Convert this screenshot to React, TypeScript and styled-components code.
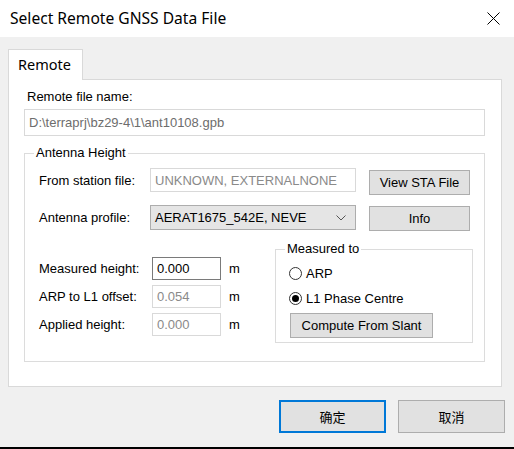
import React from 'react';
import styled, { createGlobalStyle, css } from 'styled-components';

const GlobalStyle = createGlobalStyle`
  html, body {
    margin: 0;
    padding: 0;
    background: #f0f0f0;
  }
  * {
    box-sizing: border-box;
  }
`;

const uiFont = `'Noto Sans', 'Open Sans', sans-serif`;
const formFont = `'Liberation Sans', Arial, sans-serif`;

const Window = styled.div`
  width: 514px;
  height: 449px;
  display: flex;
  flex-direction: column;
  background: #f0f0f0;
  overflow: hidden;
`;

const TitleBar = styled.div`
  height: 37px;
  background: #ffffff;
  display: flex;
  align-items: center;
  justify-content: space-between;
  padding: 0 14px 0 10px;
`;

const Title = styled.div`
  font-family: ${uiFont};
  font-size: 15.6px;
  color: #000;
  margin-top: -1px;
`;

const CloseIcon = () => (
  <svg width="13" height="13" viewBox="0 0 13 13">
    <path d="M0.5 0.5 L12.5 12.5 M12.5 0.5 L0.5 12.5" stroke="#000" strokeWidth="1" />
  </svg>
);

const Body = styled.div`
  padding: 11px 12px 0 8px;
  display: flex;
  flex-direction: column;
`;

const TabStrip = styled.div`
  display: flex;
  height: 31px;
`;

const Tab = styled.div`
  width: 75px;
  background: #ffffff;
  border: 1px solid #d9d9d9;
  border-bottom: none;
  font-family: ${uiFont};
  font-size: 14.5px;
  color: #000;
  padding: 4px 0 0 9px;
  position: relative;
  top: 1px;
`;

const Panel = styled.div`
  height: 308px;
  background: #ffffff;
  border: 1px solid #d9d9d9;
  padding: 9px 16px 0 15px;
`;

const FileLabel = styled.div`
  font-family: ${formFont};
  font-size: 13px;
  line-height: 16px;
  color: #000;
  padding-left: 3px;
`;

const FileInput = styled.div`
  margin-top: 4px;
  height: 27px;
  border: 1px solid #d9d9d9;
  font-family: ${formFont};
  font-size: 13px;
  color: #6d6d6d;
  display: flex;
  align-items: center;
  padding-left: 4px;
`;

const Group = styled.fieldset<{ $width?: number }>`
  margin: 0;
  padding: 0;
  border: 1px solid #dcdcdc;
  min-width: 0;
  flex-shrink: 0;
  ${(p) =>
    p.$width &&
    css`
      width: ${p.$width}px;
    `}
`;

const Legend = styled.legend<{ $offset: number }>`
  margin-left: ${(p) => p.$offset}px;
  padding: 0 2px;
  font-family: ${formFont};
  font-size: 13px;
  line-height: 16px;
  color: #000;
`;

const AntennaGroup = styled(Group)`
  margin-top: 9px;
  padding: 0 11px 18px 14px;
`;

const Row = styled.div<{ $top: number }>`
  display: flex;
  align-items: flex-start;
  margin-top: ${(p) => p.$top}px;
`;

const Label = styled.div<{ $width: number; $height: number }>`
  width: ${(p) => p.$width}px;
  height: ${(p) => p.$height}px;
  flex-shrink: 0;
  display: flex;
  align-items: center;
  font-family: ${formFont};
  font-size: 13px;
  color: #000;
  white-space: nowrap;
`;

const TextBox = styled.div<{ $width: number; $height: number; $active?: boolean }>`
  width: ${(p) => p.$width}px;
  height: ${(p) => p.$height}px;
  flex-shrink: 0;
  border: 1px solid ${(p) => (p.$active ? '#7a7a7a' : '#d9d9d9')};
  background: #ffffff;
  display: flex;
  align-items: center;
  padding-left: 4px;
  font-family: ${formFont};
  font-size: 13px;
  color: ${(p) => (p.$active ? '#000' : '#8a8a8a')};
  white-space: nowrap;
  overflow: hidden;
`;

const Select = styled.div`
  width: 206px;
  height: 25px;
  flex-shrink: 0;
  border: 1px solid #adadad;
  background: #e5e5e5;
  display: flex;
  align-items: center;
  justify-content: space-between;
  padding: 0 9px 0 4px;
  font-family: ${formFont};
  font-size: 13px;
  color: #000;
`;

const Chevron = () => (
  <svg width="10" height="6" viewBox="0 0 10 6">
    <path d="M0.5 0.5 L5 5 L9.5 0.5" fill="none" stroke="#555" strokeWidth="1" />
  </svg>
);

const Button = styled.div<{ $width: number; $height: number; $top?: number; $left?: number }>`
  width: ${(p) => p.$width}px;
  height: ${(p) => p.$height}px;
  flex-shrink: 0;
  margin-top: ${(p) => p.$top ?? 0}px;
  margin-left: ${(p) => p.$left ?? 0}px;
  background: #e1e1e1;
  border: 1px solid #adadad;
  display: flex;
  align-items: center;
  justify-content: center;
  font-family: ${formFont};
  font-size: 13px;
  color: #000;
  white-space: nowrap;
`;

const Lower = styled.div`
  display: flex;
  align-items: flex-start;
`;

const HeightColumn = styled.div`
  width: 236px;
  flex-shrink: 0;
  padding-top: 26px;
  display: flex;
  flex-direction: column;
  gap: 5px;
`;

const HeightRow = styled.div`
  display: flex;
  align-items: center;
`;

const Unit = styled.div`
  margin-left: 8px;
  font-family: ${formFont};
  font-size: 13px;
  color: #000;
`;

const MeasuredGroup = styled(Group)`
  margin-top: 10px;
  padding: 0 0 4px 13px;
`;

const RadioRow = styled.div<{ $top: number }>`
  display: flex;
  align-items: center;
  gap: 4px;
  height: 16px;
  margin-top: ${(p) => p.$top}px;
  font-family: ${formFont};
  font-size: 13px;
  color: #000;
`;

const RadioCircle = styled.span<{ $checked?: boolean }>`
  width: 13px;
  height: 13px;
  border-radius: 50%;
  border: 1px solid #333;
  background: #fff;
  display: flex;
  align-items: center;
  justify-content: center;

  &::after {
    content: '';
    width: 7px;
    height: 7px;
    border-radius: 50%;
    background: ${(p) => (p.$checked ? '#000' : 'transparent')};
  }
`;

const Footer = styled.div`
  flex: 1;
  display: flex;
  justify-content: flex-end;
  gap: 12px;
  padding: 13px 9px 0 0;
  border-bottom: 2px solid #000;
`;

const DialogButton = styled.div<{ $primary?: boolean }>`
  width: 107px;
  height: 33px;
  background: #e1e1e1;
  border: ${(p) => (p.$primary ? '2px solid #0078d7' : '1px solid #adadad')};
  display: flex;
  align-items: center;
  justify-content: center;
  font-family: 'Noto Sans CJK SC', ${uiFont};
  font-size: 13px;
  color: #000;
`;

const heights = [
  { label: 'Measured height:', value: '0.000', active: true },
  { label: 'ARP to L1 offset:', value: '0.054', active: false },
  { label: 'Applied height:', value: '0.000', active: false },
];

const App = () => {
  return (
    <Window>
      <GlobalStyle />
      <TitleBar>
        <Title>Select Remote GNSS Data File</Title>
        <CloseIcon />
      </TitleBar>
      <Body>
        <TabStrip>
          <Tab>Remote</Tab>
        </TabStrip>
        <Panel>
          <FileLabel>Remote file name:</FileLabel>
          <FileInput>D:\terraprj\bz29-4\1\ant10108.gpb</FileInput>

          <AntennaGroup>
            <Legend $offset={-5}>Antenna Height</Legend>
            <Row $top={7}>
              <Label $width={111} $height={24}>From station file:</Label>
              <TextBox $width={206} $height={24}>UNKNOWN, EXTERNALNONE</TextBox>
              <Button $width={101} $height={25} $top={2} $left={13}>
                View STA File
              </Button>
            </Row>
            <Row $top={10}>
              <Label $width={111} $height={25}>Antenna profile:</Label>
              <Select>
                AERAT1675_542E, NEVE
                <Chevron />
              </Select>
              <Button $width={101} $height={25} $top={1} $left={13}>
                Info
              </Button>
            </Row>
            <Lower>
              <HeightColumn>
                {heights.map((h) => (
                  <HeightRow key={h.label}>
                    <Label $width={113} $height={23}>{h.label}</Label>
                    <TextBox $width={69} $height={23} $active={h.active}>
                      {h.value}
                    </TextBox>
                    <Unit>m</Unit>
                  </HeightRow>
                ))}
              </HeightColumn>
              <MeasuredGroup $width={198}>
                <Legend $offset={-4}>Measured to</Legend>
                <RadioRow $top={8}>
                  <RadioCircle />
                  ARP
                </RadioRow>
                <RadioRow $top={9}>
                  <RadioCircle $checked />
                  L1 Phase Centre
                </RadioRow>
                <Button $width={143} $height={25} $top={7} $left={1}>
                  Compute From Slant
                </Button>
              </MeasuredGroup>
            </Lower>
          </AntennaGroup>
        </Panel>
      </Body>
      <Footer>
        <DialogButton $primary>确定</DialogButton>
        <DialogButton>取消</DialogButton>
      </Footer>
    </Window>
  );
};

export default App;
